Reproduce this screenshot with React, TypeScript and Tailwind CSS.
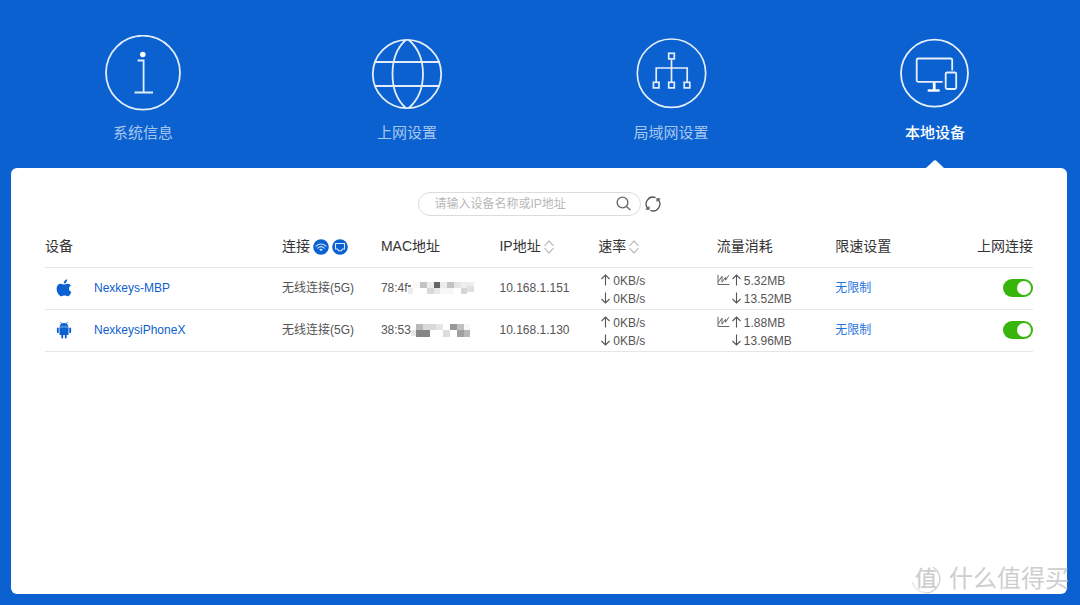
import React, { useState } from "react";

type Device = {
  name: string;
  os: "apple" | "android";
  connection: string;
  mac: string;
  ip: string;
  rateUp: string;
  rateDown: string;
  trafficUp: string;
  trafficDown: string;
  limit: string;
};

// x, y, width, height, fill
type Block = [number, number, number, number, string];

const devices: Device[] = [
  {
    name: "Nexkeys-MBP",
    os: "apple",
    connection: "无线连接(5G)",
    mac: "78:4f",
    ip: "10.168.1.151",
    rateUp: "0KB/s",
    rateDown: "0KB/s",
    trafficUp: "5.32MB",
    trafficDown: "13.52MB",
    limit: "无限制",
  },
  {
    name: "NexkeysiPhoneX",
    os: "android",
    connection: "无线连接(5G)",
    mac: "38:53",
    ip: "10.168.1.130",
    rateUp: "0KB/s",
    rateDown: "0KB/s",
    trafficUp: "1.88MB",
    trafficDown: "13.96MB",
    limit: "无限制",
  },
];

const masks: Record<string, Block[]> = {
  "78:4f": [
    [0, 4, 3, 2, "#777777"],
    [0, 7, 5, 6, "#ededed"],
    [5, 1, 7, 6, "#f8f8f8"],
    [12, 1, 7, 6, "#c4c4c4"],
    [19, 1, 7, 6, "#ececec"],
    [26, 1, 6, 6, "#656565"],
    [32, 1, 7, 6, "#ececec"],
    [39, 1, 7, 6, "#c3c3c3"],
    [46, 1, 7, 6, "#e4e4e4"],
    [53, 1, 13, 6, "#eeeeee"],
    [19, 7, 7, 6, "#d9d9d9"],
    [26, 7, 6, 6, "#e8e8e8"],
    [32, 7, 14, 6, "#f7f7f7"],
    [53, 7, 6, 6, "#d6d6d6"],
    [59, 5, 7, 6, "#e0e0e0"],
  ],
  "38:53": [
    [0, 7, 5, 6, "#e6e6e6"],
    [5, 1, 7, 6, "#b9b9b9"],
    [12, 1, 13, 6, "#d9d9d9"],
    [25, 1, 7, 6, "#e5e5e5"],
    [39, 1, 7, 6, "#999999"],
    [46, 1, 7, 6, "#c0c0c0"],
    [53, 1, 6, 6, "#f8f8f8"],
    [5, 7, 14, 7, "#858585"],
    [32, 7, 7, 7, "#dddddd"],
    [46, 7, 7, 7, "#a0a0a0"],
    [53, 7, 6, 7, "#b8b8b8"],
  ],
};

const tabs = [
  { label: "系统信息", icon: <InfoIcon /> },
  { label: "上网设置", icon: <GlobeIcon /> },
  { label: "局域网设置", icon: <LanIcon /> },
  { label: "本地设备", icon: <DevicesIcon /> },
];

export default function App() {
  const [active, setActive] = useState("本地设备");

  const [keyword, setKeyword] = useState("");

  const filtered = devices.filter(
    (device) =>
      device.name.toLowerCase().includes(keyword.toLowerCase()) ||
      device.ip.includes(keyword),
  );

  return (
    <div className="relative min-h-screen flex flex-col bg-[#0b61cf] pl-[11px] pr-[13px] pb-[11px] font-['Liberation_Sans','Noto_Sans_CJK_SC',sans-serif]">
      <nav className="grid grid-cols-4">
        {tabs.map((tab) => (
          <button
            key={tab.label}
            type="button"
            onClick={() => setActive(tab.label)}
            className="relative flex flex-col items-center pt-[35px] pb-[23px]"
          >
            {tab.icon}

            <span
              className={
                tab.label === active
                  ? "mt-[10px] text-[15px] leading-6 font-medium text-white"
                  : "mt-[10px] text-[15px] leading-6 text-[#a5c6ef]"
              }
            >
              {tab.label}
            </span>

            {tab.label === active && (
              <svg
                viewBox="0 0 18 8"
                className="absolute bottom-0 left-1/2 -translate-x-1/2 w-[18px] h-2"
              >
                <path d="M0 8 8 .6Q9-.2 10 .6L18 8Z" fill="#fff" />
              </svg>
            )}
          </button>
        ))}
      </nav>

      <main className="flex-1 bg-white rounded-md px-[34px] pt-6">
        <form
          className="flex justify-center items-center gap-1"
          onSubmit={(e) => e.preventDefault()}
        >
          <div className="flex items-center w-[223px] h-6 border border-[#dcdcdc] rounded-full pl-4 pr-2">
            <input
              type="text"
              aria-label="请输入设备名称或IP地址"
              placeholder="请输入设备名称或IP地址"
              value={keyword}
              onChange={(e) => setKeyword(e.target.value)}
              className="flex-1 min-w-0 text-xs text-[#333] placeholder:text-[#b8b8b8] outline-none"
            />

            <button type="submit" aria-label="搜索">
              <svg
                viewBox="0 0 16 16"
                className="w-4 h-4"
                fill="none"
                stroke="#666"
                strokeWidth="1.3"
              >
                <circle cx="6.5" cy="6.5" r="5.4" />
                <path d="m10.400 10.400 4 3.600" />
              </svg>
            </button>
          </div>

          <button type="button" aria-label="刷新">
            <svg
              viewBox="0 0 16 16"
              className="w-4 h-4"
              fill="none"
              stroke="#555"
              strokeWidth="1.3"
            >
              <path d="M3.200 12.800A6.800 6.800 0 0 1 10.600 1.700" />
              <path d="M12.800 3.200A6.800 6.800 0 0 1 5.400 14.300" />
              <path d="M.8 13.200H3.900V10.400M15.200 2.800H12.100V5.600" />
            </svg>
          </button>
        </form>

        <table className="w-full table-fixed mt-[9px] text-xs text-[#555]">
          <colgroup>
            <col className="w-[24%]" />
            <col className="w-[10%]" />
            <col className="w-[12%]" />
            <col className="w-[10%]" />
            <col className="w-[12%]" />
            <col className="w-[12%]" />
            <col className="w-[20%]" />
          </colgroup>

          <thead>
            <tr className="h-[42px] border-b border-[#e6e6e6] text-sm text-[#333] text-left whitespace-nowrap">
              <th className="p-0 font-normal">设备</th>
              <th className="p-0 font-normal">
                <div className="flex items-center">
                  连接
                  <button type="button" aria-label="无线" className="ml-[3px]">
                    <WifiBadge />
                  </button>
                  <button type="button" aria-label="有线" className="ml-[3px]">
                    <WiredBadge />
                  </button>
                </div>
              </th>
              <th className="p-0 font-normal">MAC地址</th>
              <th className="p-0 font-normal">
                <SortHeader title="IP地址" />
              </th>
              <th className="p-0 font-normal">
                <SortHeader title="速率" />
              </th>
              <th className="p-0 font-normal">流量消耗</th>
              <th className="p-0 font-normal">
                <div className="flex justify-between">
                  <span>限速设置</span>
                  <span>上网连接</span>
                </div>
              </th>
            </tr>
          </thead>

          <tbody>
            {filtered.map((device) => (
              <DeviceRow key={device.name} device={device} />
            ))}
          </tbody>
        </table>
      </main>

      <Watermark />
    </div>
  );
}

function DeviceRow({ device }: { device: Device }) {
  const [online, setOnline] = useState(true);

  return (
    <tr className="border-b border-[#e6e6e6] whitespace-nowrap">
      <td className="p-0 pb-px">
        <div className="flex items-center pl-[11px] gap-[22px]">
          {device.os === "apple" ? <AppleIcon /> : <AndroidIcon />}

          <a href="#device" className="text-[#0b61cf]">
            {device.name}
          </a>
        </div>
      </td>

      <td className="p-0 pb-px">{device.connection}</td>

      <td className="p-0 pb-px">
        <div className="flex items-center">
          {device.mac}
          <svg
            viewBox="0 0 66 14"
            className="w-[66px] h-[14px]"
            shapeRendering="crispEdges"
          >
            {masks[device.mac].map(([x, y, w, h, fill]) => (
              <rect
                key={`${x}-${y}`}
                x={x}
                y={y}
                width={w}
                height={h}
                fill={fill}
              />
            ))}
          </svg>
        </div>
      </td>

      <td className="p-0 pb-px">{device.ip}</td>

      <td className="p-0 pt-1 pb-px leading-[18px]">
        <div className="flex items-center pl-[3px] gap-[2px]">
          <Arrow dir="up" />
          {device.rateUp}
        </div>
        <div className="flex items-center pl-[3px] gap-[2px]">
          <Arrow dir="down" />
          {device.rateDown}
        </div>
      </td>

      <td className="p-0 pt-1 pb-px leading-[18px]">
        <div className="flex items-center gap-[2px]">
          <button type="button" aria-label="流量图">
            <ChartIcon />
          </button>
          <Arrow dir="up" />
          {device.trafficUp}
        </div>
        <div className="flex items-center pl-[15px] gap-[2px]">
          <Arrow dir="down" />
          {device.trafficDown}
        </div>
      </td>

      <td className="p-0 pb-px">
        <div className="flex items-center justify-between">
          <a href="#limit" className="text-[#1f74e0]">
            {device.limit}
          </a>

          <label className="relative block w-[30px] h-[18px]">
            <input
              type="checkbox"
              aria-label={`${device.name} 上网连接`}
              checked={online}
              onChange={(e) => setOnline(e.target.checked)}
              className="peer block appearance-none w-[30px] h-[18px] rounded-full bg-[#ccc] checked:bg-[#38b50c]"
            />
            <span className="absolute top-[2px] left-[2px] w-[14px] h-[14px] rounded-full bg-white peer-checked:left-[14px]" />
          </label>
        </div>
      </td>
    </tr>
  );
}

function SortHeader({ title }: { title: string }) {
  return (
    <button type="button" className="flex items-center gap-[3px]">
      {title}
      <svg
        viewBox="0 0 10 14"
        className="w-[10px] h-[14px] mt-[3px]"
        fill="none"
        stroke="#bdbdbd"
        strokeWidth="1.2"
      >
        <path d="M.5 5.8 5 1l4.500 4.800M.5 8.200 5 13l4.500-4.800" />
      </svg>
    </button>
  );
}

function Arrow({ dir }: { dir: "up" | "down" }) {
  return (
    <svg
      viewBox="0 0 10 12"
      className="w-[10px] h-3 mb-[2px]"
      fill="none"
      stroke="#555"
      strokeWidth="1.100"
    >
      {dir === "up" ? (
        <path d="M4.500 11.500V1M.5 5l4-4 4 4" />
      ) : (
        <path d="M4.500 .5V11M.5 7l4 4 4-4" />
      )}
    </svg>
  );
}

function ChartIcon() {
  return (
    <svg
      viewBox="0 0 13 12"
      className="w-[13px] h-3 mb-[2px]"
      fill="none"
      stroke="#666"
      strokeWidth="1"
    >
      <path d="M1 .8v9.700h11.400" />
      <path d="M1.300 7.800 5 2.200V8.200L8.600 3.200V6.200L11.800 1.200" />
    </svg>
  );
}

function WifiBadge() {
  return (
    <svg viewBox="0 0 16 16" className="block w-4 h-4 mt-[3px]" fill="none">
      <circle cx="8" cy="8" r="7.800" fill="#0b61cf" />
      <g stroke="#cfe0f7" strokeWidth="1.100" strokeLinecap="round">
        <path d="M3 7.200Q8 2.800 13 7.200" />
        <path d="M4.700 9.200Q8 6.200 11.300 9.200" />
      </g>
      <path d="M6.200 10.600Q8 9 9.800 10.600L8 12.300Z" fill="#cfe0f7" />
    </svg>
  );
}

function WiredBadge() {
  return (
    <svg viewBox="0 0 16 16" className="block w-4 h-4 mt-[3px]" fill="none">
      <circle cx="8" cy="8" r="7.800" fill="#0b61cf" />
      <path
        d="M3.500 4.500h9v5.500h-2l-1 1.700h-3l-1-1.700h-2Z"
        stroke="#dbe8fa"
        strokeWidth="1.100"
        strokeLinejoin="round"
      />
    </svg>
  );
}

function AppleIcon() {
  return (
    <svg viewBox="0 0 16 18" className="w-4 h-[18px]" fill="#0b61cf">
      <path d="M11.200.3c.1 1.100-.3 2.100-.9 2.900-.7.800-1.600 1.300-2.500 1.200-.1-1 .3-2 .9-2.700.7-.8 1.700-1.300 2.500-1.400Z" />
      <path d="M14.900 6.500c-1.200.8-1.900 1.800-1.900 3.200 0 1.600.9 2.800 2.400 3.400-.5 1.400-1.900 4-3.500 4.200-1.200.1-1.800-.7-3.200-.7s-2 .7-3.100.7C3 17.200.6 13.200.6 9.700c0-3.200 2-4.900 4.200-5 1.300 0 2.400.8 3.300.8s2.200-.9 3.700-.8c1.200.1 2.400.7 3.100 1.800Z" />
    </svg>
  );
}

function AndroidIcon() {
  return (
    <svg viewBox="0 0 16 18" className="w-4 h-[18px]" fill="#0b61cf">
      <path d="m4.300.8 1.600 2M11.700.8l-1.600 2" stroke="#0b61cf" strokeWidth=".7" />
      <path d="M3.500 5.700C3.500 3.600 5.500 2 8 2s4.500 1.600 4.500 3.700Z" />
      <path d="M3.500 6.300h9v7.200q0 .6-.6.600h-1.200v2.400a.9.900 0 0 1-1.900 0v-2.400H7.200v2.400a.9.900 0 0 1-1.900 0v-2.400H4.100q-.6 0-.6-.6Z" />
      <rect x=".9" y="6.600" width="1.900" height="5.600" rx=".9" />
      <rect x="13.200" y="6.600" width="1.900" height="5.600" rx=".9" />
      <circle cx="6" cy="4.200" r=".4" fill="#fff" />
      <circle cx="10" cy="4.200" r=".4" fill="#fff" />
    </svg>
  );
}

function InfoIcon() {
  return (
    <svg
      viewBox="0 0 76 76"
      className="w-[76px] h-[76px]"
      fill="none"
      stroke="#e3edfa"
      strokeWidth="1.800"
    >
      <circle cx="38" cy="37.700" r="37" />
      <circle cx="37.800" cy="19.500" r="2.800" fill="#fff" stroke="none" />
      <path d="M32.600 25.500h6v32M29.500 57.500h18.500" />
    </svg>
  );
}

function GlobeIcon() {
  return (
    <svg
      viewBox="0 0 76 76"
      className="w-[76px] h-[76px]"
      fill="none"
      stroke="#e3edfa"
      strokeWidth="1.800"
    >
      <circle cx="38" cy="39" r="34.200" />
      <path d="M37 4.800C26.500 14 23.500 27 23.500 39S26.500 64 37 73.200M39.500 4.800C50.500 14 54 27 54 39S50.500 64 39.500 73.200" />
      <path d="M6 27h64M6 51h64" />
    </svg>
  );
}

function LanIcon() {
  return (
    <svg
      viewBox="0 0 76 76"
      className="w-[76px] h-[76px]"
      fill="none"
      stroke="#e3edfa"
      strokeWidth="1.700"
    >
      <circle cx="38.500" cy="38.200" r="34.200" />
      <path d="M38.500 24.500V47M23.200 47V33h31v14" />
      <rect x="35.700" y="18.300" width="5.600" height="5.600" />
      <rect x="20.400" y="47.300" width="5.600" height="5.600" />
      <rect x="35.700" y="47.300" width="5.600" height="5.600" />
      <rect x="51.200" y="47.300" width="5.600" height="5.600" />
    </svg>
  );
}

function DevicesIcon() {
  return (
    <svg
      viewBox="0 0 76 76"
      className="w-[76px] h-[76px]"
      fill="none"
      stroke="#e8f0fb"
      strokeWidth="1.800"
    >
      <circle cx="37.500" cy="38.200" r="33.500" />
      <path d="M45.700 46.800H21.200q-1.500 0-1.500-1.500V25q0-1.500 1.500-1.500H53.700q1.500 0 1.500 1.500V35.500" />
      <rect x="48.700" y="37.500" width="10.500" height="16.500" rx="1.500" />
      <path d="M37.200 47.500V55" stroke="#fff" strokeWidth="2.800" />
      <path d="M30.700 55.500h12" stroke="#fff" strokeWidth="2.400" />
    </svg>
  );
}

function Watermark() {
  return (
    <div className="absolute right-[11px] bottom-[11px] flex items-center gap-2 text-[#cecece] pointer-events-none">
      <div className="relative w-[30px] h-[30px] flex items-center justify-center">
        <svg
          viewBox="0 0 30 30"
          className="absolute inset-0 w-[30px] h-[30px]"
          fill="none"
          stroke="#cfcfcf"
          strokeWidth="1.300"
        >
          <path d="M22 3A14 14 0 0 1 15 29" />
          <path d="M15 29A14 14 0 0 1 1.500 18" stroke="#e6e6e6" />
        </svg>
        <span className="text-[22px] leading-[30px] font-medium">值</span>
      </div>
      <span className="text-2xl leading-[30px]">什么值得买</span>
    </div>
  );
}
